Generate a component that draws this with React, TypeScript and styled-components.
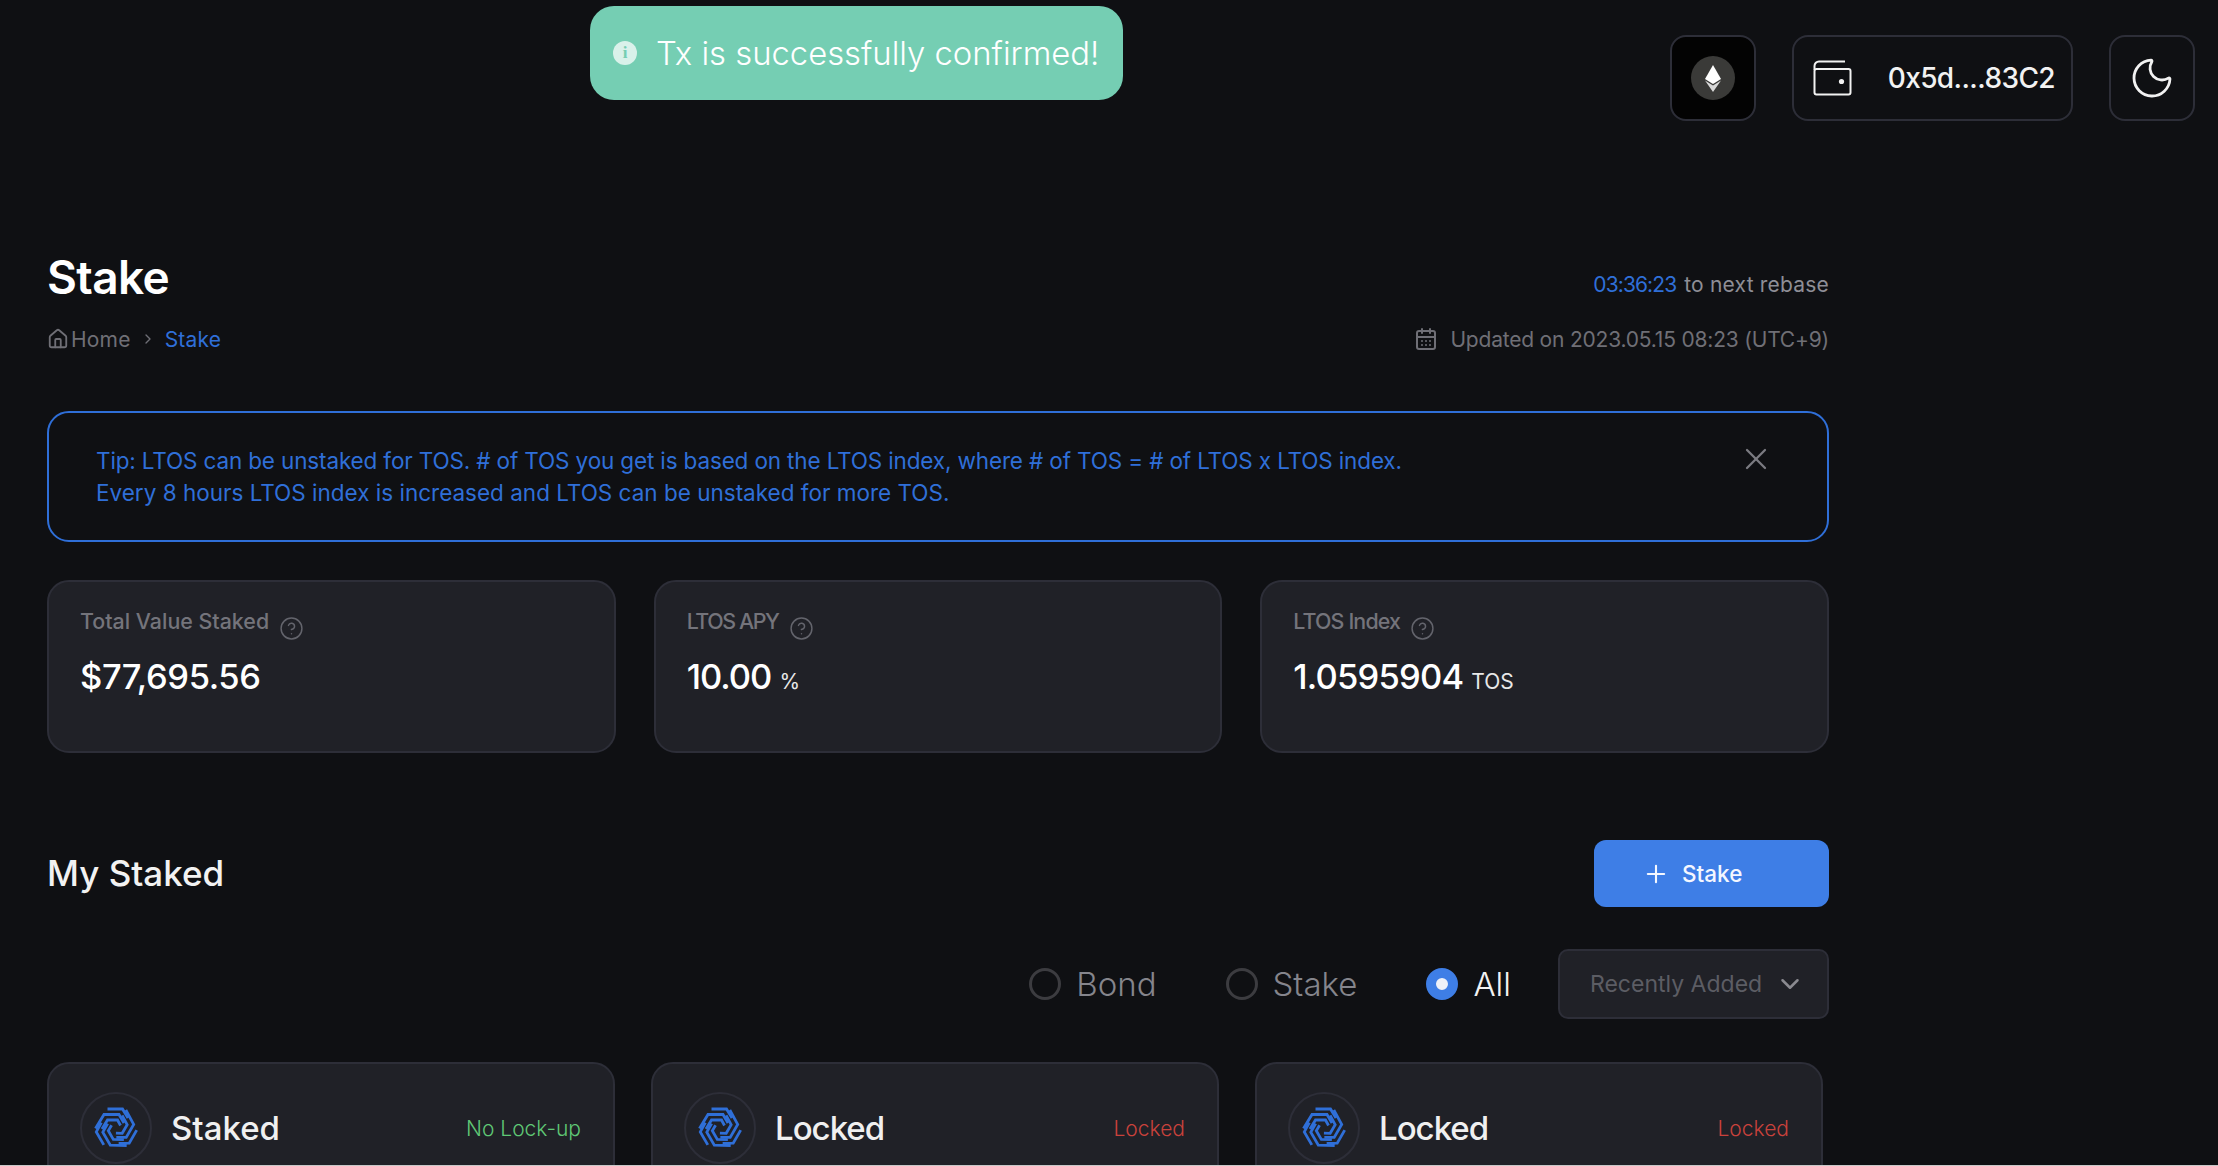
import React from 'react';
import styled, { createGlobalStyle } from 'styled-components';
import { Plus, X, ChevronDown, ChevronRight, Moon, CircleHelp, House, CalendarDays } from 'lucide-react';

const sans = `"Inter", "Liberation Sans", sans-serif`;

const Global = createGlobalStyle`
  html, body {
    margin: 0;
    height: 100%;
    background: #0f1013;
    overflow: hidden;
  }
  * { box-sizing: border-box; }
`;

const Page = styled.div`
  height: 1166px;
  overflow: hidden;
  position: relative;
  background: #0f1013;
  font-family: ${sans};
  color: #fff;
  border-bottom: 1px solid #c8c8c8;
`;

const Toast = styled.div`
  position: absolute;
  left: 590px;
  top: 6px;
  width: 533px;
  height: 94px;
  border-radius: 24px;
  background: #75ceb3;
  display: flex;
  align-items: center;
  gap: 19px;
  padding-left: 23px;
  font-size: 32.8px;
  font-weight: 300;
  color: #fff;
`;

const ToastIcon = styled.span`
  width: 24px;
  height: 24px;
  border-radius: 50%;
  background: #d9f1ea;
  color: #75ceb3;
  font: 700 17px "Liberation Serif", serif;
  display: flex;
  align-items: center;
  justify-content: center;
`;

const TopBar = styled.header`
  display: flex;
  justify-content: flex-end;
  gap: 36px;
  padding: 35px 23px 0 0;
`;

const TopButton = styled.div<{ $black?: boolean; $wide?: boolean }>`
  width: ${({ $wide }) => ($wide ? '281px' : '86px')};
  height: 86px;
  border: 2px solid #2d2e38;
  border-radius: 16px;
  background: ${({ $black }) => ($black ? '#030303' : 'transparent')};
  display: flex;
  align-items: center;
  justify-content: ${({ $wide }) => ($wide ? 'space-between' : 'center')};
  padding: ${({ $wide }) => ($wide ? '0 16px 0 19px' : '0')};
  color: #f2f2f2;
`;

const ChainDot = styled.div`
  width: 44px;
  height: 44px;
  border-radius: 50%;
  background: #3a3a38;
  display: flex;
  align-items: center;
  justify-content: center;
`;

const Address = styled.span`
  font-size: 28px;
  font-weight: 500;
  letter-spacing: -0.6px;
`;

const Main = styled.main`
  width: 1782px;
  margin-left: 47px;
  padding-top: 129px;
`;

const TitleRow = styled.div`
  display: flex;
  justify-content: space-between;
  align-items: flex-end;
  height: 54px;
`;

const Title = styled.h1`
  margin: 0;
  font-size: 46px;
  font-weight: 600;
  line-height: 54px;
  letter-spacing: -0.6px;
`;

const Rebase = styled.div`
  font-size: 21px;
  letter-spacing: 0.2px;
  color: #8e8e96;
  line-height: 34px;
  display: flex;
  gap: 8px;
  margin-bottom: 2px;
`;

const Blue = styled.span`
  color: #2f6fd8;
`;

const Countdown = styled(Blue)`
  letter-spacing: -0.9px;
`;

const CrumbRow = styled.div`
  display: flex;
  justify-content: space-between;
  align-items: center;
  margin-top: 20px;
  height: 30px;
  font-size: 21px;
  color: #6f6f76;
`;

const Crumbs = styled.div`
  display: flex;
  align-items: center;
  gap: 2px;
  letter-spacing: 0.2px;
`;

const CrumbArrow = styled(ChevronRight)`
  margin: 0 7px;
`;

const Updated = styled.div`
  display: flex;
  align-items: center;
  gap: 12px;
  letter-spacing: -0.2px;
`;

const Tip = styled.div`
  margin-top: 57px;
  height: 131px;
  border: 2px solid #2f6fd8;
  border-radius: 22px;
  padding: 32px 47px 0;
  display: flex;
  justify-content: space-between;
  align-items: flex-start;
  color: #2f6fd8;
  font-size: 22.5px;
  line-height: 32px;
`;

const TipLine = styled.div<{ $tight?: boolean }>`
  letter-spacing: ${({ $tight }) => ($tight ? '-0.145px' : '0')};
`;

const TipClose = styled.div`
  color: #7b7b82;
  margin: -4px 6px 0 0;
  display: flex;
`;

const StatGrid = styled.div`
  display: grid;
  grid-template-columns: repeat(3, 1fr);
  gap: 38px;
  margin-top: 38px;
`;

const StatCard = styled.div`
  height: 173px;
  border: 2px solid #2d2e38;
  border-radius: 22px;
  background: #202127;
  padding: 24px 31px;
`;

const StatLabel = styled.div<{ $tracking: number }>`
  display: flex;
  align-items: flex-start;
  gap: 10px;
  font-size: 21.4px;
  font-weight: 500;
  color: #74747b;
  line-height: 30px;
  letter-spacing: ${({ $tracking }) => $tracking}px;
`;

const HelpIcon = styled.span`
  display: flex;
  margin-top: 10px;
  color: #63646c;
`;

const StatValue = styled.div<{ $tracking: number }>`
  display: flex;
  align-items: baseline;
  gap: 8px;
  margin-top: 14px;
  font-size: 34.5px;
  font-weight: 500;
  line-height: 44px;
  letter-spacing: ${({ $tracking }) => $tracking}px;
`;

const StatUnit = styled.span`
  font-size: 21px;
  font-weight: 400;
  color: #e8e8e8;
  letter-spacing: 0;
`;

const SectionRow = styled.div`
  display: flex;
  justify-content: space-between;
  align-items: center;
  margin-top: 87px;
`;

const SectionTitle = styled.h2`
  margin: 0 0 2px;
  font-size: 35px;
  font-weight: 500;
  color: #f2f2f2;
`;

const StakeButton = styled.div`
  width: 235px;
  height: 67px;
  border-radius: 12px;
  background: #3e7ee6;
  display: flex;
  align-items: center;
  gap: 12px;
  padding-left: 48px;
  font-size: 22.5px;
  font-weight: 500;
  color: #f4f7ff;
`;

const FilterRow = styled.div`
  display: flex;
  justify-content: flex-end;
  align-items: center;
  margin-top: 42px;
  height: 70px;
`;

const RadioItem = styled.label<{ $on?: boolean }>`
  display: flex;
  align-items: center;
  gap: 15px;
  margin-right: ${({ $on }) => ($on ? '47px' : '69px')};
  font-size: 33px;
  font-weight: 300;
  color: ${({ $on }) => ($on ? '#f2f2f2' : '#85858c')};
`;

const RadioMark = styled.span<{ $on?: boolean }>`
  width: 32px;
  height: 32px;
  border-radius: 50%;
  border: ${({ $on }) => ($on ? '10px solid #3e7ee6' : '3px solid #3c3c40')};
  background: ${({ $on }) => ($on ? '#eef1f8' : 'transparent')};
`;

const Select = styled.div`
  width: 271px;
  height: 70px;
  border: 2px solid #2d2e38;
  border-radius: 10px;
  background: #202127;
  display: flex;
  align-items: center;
  justify-content: space-between;
  padding: 0 22px 0 30px;
  font-size: 23px;
  color: #5c5d64;
`;

const CardGrid = styled.div`
  display: grid;
  grid-template-columns: repeat(3, 568px);
  gap: 36px;
  margin-top: 43px;
`;

const StakedCard = styled.div`
  height: 240px;
  border: 2px solid #2d2e38;
  border-radius: 22px;
  background: #202127;
  padding: 28px 32px 28px 31px;
`;

const CardHead = styled.div`
  display: flex;
  align-items: center;
  gap: 19px;
`;

const LogoRing = styled.div`
  width: 72px;
  height: 72px;
  border-radius: 50%;
  border: 2px solid #2d2e38;
  display: flex;
  align-items: center;
  justify-content: center;
`;

const CardTitle = styled.div<{ $locked?: boolean }>`
  flex: 1;
  font-size: 33px;
  font-weight: 500;
  color: #f0f0f0;
  letter-spacing: ${({ $locked }) => ($locked ? '-1px' : '0')};
`;

const Status = styled.div<{ $locked?: boolean }>`
  font-size: 21px;
  font-weight: 300;
  color: ${({ $locked }) => ($locked ? '#c9423c' : '#5fc775')};
`;

const EthIcon = () => (
  <svg width="16" height="27" viewBox="0 0 16 27">
    <path d="M8 0 L16 14 L8 19 L0 14 Z" fill="#fff" />
    <path d="M0 15.5 L8 20.5 L16 15.5 L8 27 Z" fill="#d8d8d8" />
  </svg>
);

const WalletIcon = () => (
  <svg width="39" height="36" viewBox="0 0 39 36" fill="none" stroke="currentColor" strokeWidth="2">
    <path d="M1.5 10 V6 a4.5 4.5 0 0 1 4.5 -4.5 H32" />
    <rect x="1.5" y="9" width="36" height="25.5" rx="2" />
    <circle cx="28.5" cy="21.5" r="2.6" fill="currentColor" stroke="none" />
  </svg>
);

const TosLogo = () => {
  const arms = [0, 120, 240];
  return (
    <svg width="50" height="50" viewBox="-50 -50 100 100" fill="none" stroke="#2f6fd8" strokeWidth="5.6">
      {arms.map((deg) => (
        <g key={deg} transform={`rotate(${deg})`}>
          <path d="M-17 -38 H13 L24 -20" />
          <path d="M-41 1 L-24 -27 H6 L16 -10" />
          <path d="M-28 2 L-17 -16 H3 L9 -5" />
        </g>
      ))}
    </svg>
  );
};

const stats = [
  { label: 'Total Value Staked', labelTracking: 0, value: '$77,695.56', valueTracking: -0.4, unit: '' },
  { label: 'LTOS APY', labelTracking: -1.4, value: '10.00', valueTracking: -1, unit: '%' },
  { label: 'LTOS Index', labelTracking: -0.85, value: '1.0595904', valueTracking: -0.8, unit: 'TOS' },
];

const cards = [
  { title: 'Staked', status: 'No Lock-up', locked: false },
  { title: 'Locked', status: 'Locked', locked: true },
  { title: 'Locked', status: 'Locked', locked: true },
];

const App = () => {
  return (
    <Page>
      <Global />
      <Toast>
        <ToastIcon>i</ToastIcon>
        Tx is successfully confirmed!
      </Toast>
      <TopBar>
        <TopButton $black>
          <ChainDot>
            <EthIcon />
          </ChainDot>
        </TopButton>
        <TopButton $wide>
          <WalletIcon />
          <Address>0x5d....83C2</Address>
        </TopButton>
        <TopButton>
          <Moon size={48} strokeWidth={1.4} />
        </TopButton>
      </TopBar>
      <Main>
        <TitleRow>
          <Title>Stake</Title>
          <Rebase>
            <Countdown>03:36:23</Countdown>
            to next rebase
          </Rebase>
        </TitleRow>
        <CrumbRow>
          <Crumbs>
            <House size={22} />
            Home
            <CrumbArrow size={16} />
            <Blue>Stake</Blue>
          </Crumbs>
          <Updated>
            <CalendarDays size={24} />
            Updated on 2023.05.15 08:23 (UTC+9)
          </Updated>
        </CrumbRow>
        <Tip>
          <div>
            <TipLine $tight>
              Tip: LTOS can be unstaked for TOS. # of TOS you get is based on the LTOS index, where # of TOS = # of LTOS x LTOS index.
            </TipLine>
            <TipLine>Every 8 hours LTOS index is increased and LTOS can be unstaked for more TOS.</TipLine>
          </div>
          <TipClose>
            <X size={36} strokeWidth={1.5} />
          </TipClose>
        </Tip>
        <StatGrid>
          {stats.map((s) => (
            <StatCard key={s.label}>
              <StatLabel $tracking={s.labelTracking}>
                {s.label}
                <HelpIcon>
                  <CircleHelp size={25} strokeWidth={1.4} />
                </HelpIcon>
              </StatLabel>
              <StatValue $tracking={s.valueTracking}>
                {s.value}
                {s.unit && <StatUnit>{s.unit}</StatUnit>}
              </StatValue>
            </StatCard>
          ))}
        </StatGrid>
        <SectionRow>
          <SectionTitle>My Staked</SectionTitle>
          <StakeButton>
            <Plus size={28} strokeWidth={1.8} />
            Stake
          </StakeButton>
        </SectionRow>
        <FilterRow>
          <RadioItem>
            <RadioMark />
            Bond
          </RadioItem>
          <RadioItem>
            <RadioMark />
            Stake
          </RadioItem>
          <RadioItem $on>
            <RadioMark $on />
            All
          </RadioItem>
          <Select>
            Recently Added
            <ChevronDown size={30} color="#8a8a90" />
          </Select>
        </FilterRow>
        <CardGrid>
          {cards.map((c, i) => (
            <StakedCard key={i}>
              <CardHead>
                <LogoRing>
                  <TosLogo />
                </LogoRing>
                <CardTitle $locked={c.locked}>{c.title}</CardTitle>
                <Status $locked={c.locked}>{c.status}</Status>
              </CardHead>
            </StakedCard>
          ))}
        </CardGrid>
      </Main>
    </Page>
  );
};

export default App;
